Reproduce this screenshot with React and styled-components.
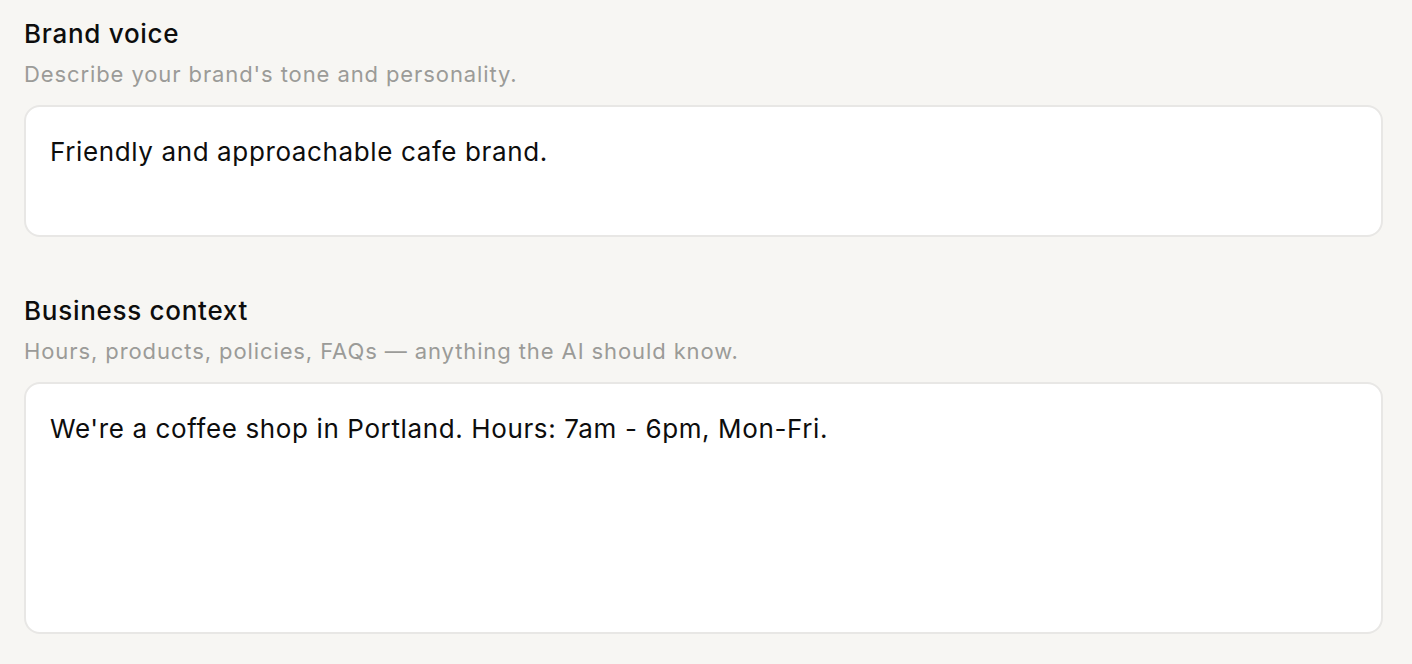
import React from "react";
import styled, { createGlobalStyle } from "styled-components";

const Global = createGlobalStyle`
  html, body { margin: 0; padding: 0; background: #f7f6f3; }
  body { font-family: Inter, "Liberation Sans", Arial, sans-serif; color: #111; }
`;

const Page = styled.div`
  display: flex;
  flex-direction: column;
  gap: 58px;
  padding: 18px 29px 0 24px;
`;

const Section = styled.section`
  display: flex;
  flex-direction: column;
`;

const Title = styled.h2`
  margin: 0;
  font-size: 26px;
  line-height: 32px;
  font-weight: 500;
  letter-spacing: 0.72px;
  color: #0d0d0d;
`;

const Hint = styled.p`
  margin: 10px 0 17px;
  font-size: 22px;
  line-height: 28px;
  letter-spacing: 0.9px;
  color: #9b9b98;
`;

const Field = styled.textarea`
  box-sizing: border-box;
  width: 100%;
  height: ${(p) => p.$h}px;
  margin: 0;
  padding: 27px 24px 24px;
  border: 2px solid #e8e7e5;
  border-radius: 16px;
  background: #fff;
  font-family: inherit;
  font-size: 26px;
  line-height: 36px;
  letter-spacing: 0.62px;
  color: #0d0d0d;
  resize: none;
  outline: none;
  display: block;
`;

const fields = [
  {
    title: "Brand voice",
    hint: "Describe your brand's tone and personality.",
    value: "Friendly and approachable cafe brand.",
    h: 132,
  },
  {
    title: "Business context",
    hint: "Hours, products, policies, FAQs \u2014 anything the AI should know.",
    value: "We're a coffee shop in Portland. Hours: 7am - 6pm, Mon-Fri.",
    h: 252,
  },
];

export default function App() {
  return (
    <>
      <Global />
      <Page>
        {fields.map((f) => (
          <Section key={f.title}>
            <Title>{f.title}</Title>
            <Hint>{f.hint}</Hint>
            <Field $h={f.h} defaultValue={f.value} readOnly />
          </Section>
        ))}
      </Page>
    </>
  );
}
